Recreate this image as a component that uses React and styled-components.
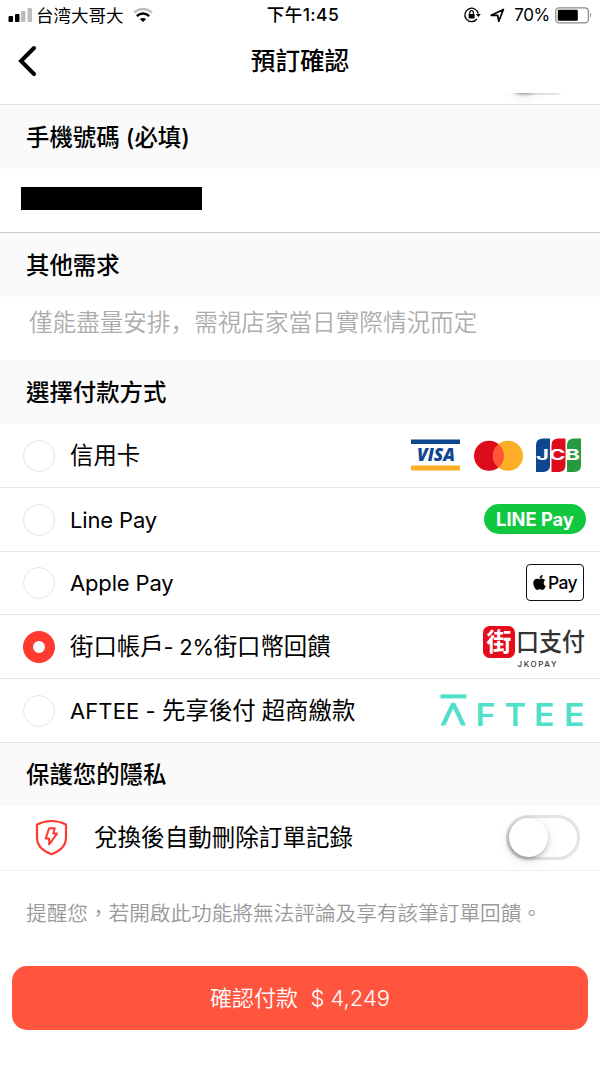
import { FaApple } from "react-icons/fa";
import styled, { createGlobalStyle, css } from "styled-components";

const GlobalStyle = createGlobalStyle`
  * {
    box-sizing: border-box;
  }

  body {
    margin: 0;
    background-color: #fff;
    color: #000;
    font-family: Inter, "Noto Sans CJK TC", sans-serif;
  }

  svg {
    flex: none;
    overflow: visible;
  }
`;

const Screen = styled.div`
  display: flex;
  flex-direction: column;
  width: 600px;
  height: 1067px;
  overflow: hidden;
  background-color: #fff;
`;

const StatusBar = styled.div`
  display: grid;
  grid-template-columns: 1fr auto 1fr;
  align-items: center;
  height: 30px;
  padding: 0 7px 0 8px;
  font-size: 17.5px;
  line-height: 28px;
  white-space: nowrap;
`;

const StatusGroup = styled.div`
  display: flex;
  align-items: center;
  justify-content: ${(props) => (props.$end ? "flex-end" : "flex-start")};
`;

const Carrier = styled.span`
  margin: 0 9px 0 4px;
  font-family: "Noto Sans CJK SC", sans-serif;
`;

const Clock = styled.span`
  padding-left: 5px;
  font-weight: 500;
  letter-spacing: 0.4px;
`;

const Percent = styled.span`
  margin: 0 5px 0 9px;
  font-size: 17px;
  letter-spacing: -0.3px;
`;

const NavBar = styled.header`
  display: grid;
  grid-template-columns: 60px 1fr 60px;
  align-items: center;
  height: 63px;
`;

const BackButton = styled.button`
  display: flex;
  padding: 0 0 2px 18px;
  border: none;
  background: none;
`;

const Title = styled.h1`
  margin: 0;
  text-align: center;
  font-weight: 500;
  font-size: 24.6px;
  line-height: 61px;
`;

const ScrolledRow = styled.div`
  display: flex;
  align-items: flex-end;
  justify-content: flex-end;
  height: 11px;
  padding: 0 24px 9px 0;
  overflow: hidden;
`;

const SectionTitle = styled.h2`
  height: ${(props) => props.$height || 64}px;
  margin: 0;
  padding-left: 26px;
  border-top: 1px solid ${(props) => props.$line || "#fafafa"};
  background-color: #fafafa;
  font-weight: 500;
  font-size: 23.4px;
  line-height: ${(props) => (props.$height ? 65 : 64)}px;
`;

const PhoneField = styled.div`
  display: flex;
  align-items: center;
  height: 63px;
  padding: 0 0 4px 21px;
`;

const Redacted = styled.div`
  width: 181px;
  height: 23px;
  background-color: #000;
`;

const Placeholder = styled.div`
  height: 63px;
  padding-left: 29px;
  color: #adadad;
  font-size: 23.6px;
  font-weight: 350;
  line-height: 49px;
`;

const LowComma = styled.span`
  font-family: "Noto Sans CJK SC", sans-serif;
`;

const Option = styled.div`
  display: flex;
  align-items: center;
  height: ${(props) => props.$height || 64}px;
  padding: 0 15px 0 23px;
  ${(props) =>
    !props.$last &&
    css`
      border-bottom: 1px solid #e6e6e6;
    `}
`;

const Radio = styled.span`
  width: 32px;
  height: 32px;
  margin-right: 15px;
  border: ${(props) => (props.$checked ? "10px solid #ff3b30" : "1.5px solid #e6e6e6")};
  border-radius: 50%;
`;

const Label = styled.span`
  flex: 1;
  font-size: 23.4px;
  line-height: 62px;
  white-space: pre;
`;

const Latin = styled.span`
  font-size: 22px;
  letter-spacing: ${(props) => props.$spacing || -0.15}px;
`;

const Logos = styled.span`
  display: flex;
  align-items: center;
  margin-top: -2px;
`;

const LinePayBadge = styled.span`
  width: 102px;
  height: 30px;
  margin-right: -1px;
  border-radius: 15px;
  background-color: #0fc83f;
  color: #fff;
  font-weight: 700;
  font-size: 18.3px;
  line-height: 30px;
  text-align: center;
`;

const ApplePayBadge = styled.span`
  display: flex;
  align-items: center;
  justify-content: center;
  width: 58px;
  height: 37px;
  margin-right: 1px;
  padding-right: 2px;
  border: 1.5px solid #111;
  border-radius: 4px;
  font-weight: 500;
  font-size: 17.5px;
  letter-spacing: -0.7px;
`;

const PrivacyRow = styled.div`
  display: flex;
  align-items: center;
  height: 65px;
  padding: 0 20px 2px 35px;
  border-bottom: 1px solid #f0f0f0;
`;

const PrivacyLabel = styled(Label)`
  padding: 2px 0 0 26px;
  font-size: 23.55px;
`;

const Track = styled.span`
  display: block;
  flex: none;
  width: 74px;
  height: 45px;
  border: 3px solid #e3e3e3;
  border-radius: 23px;
`;

const Knob = styled.span`
  display: block;
  width: 39px;
  height: 39px;
  border-radius: 50%;
  background-color: #fff;
  box-shadow: -1px 2px 4px rgba(0, 0, 0, 0.32), 0 3px 14px rgba(0, 0, 0, 0.1);
`;

const Hint = styled.p`
  height: 95px;
  margin: 0;
  padding-left: 26px;
  color: #999;
  font-weight: 350;
  font-size: 20.65px;
  line-height: 86px;
  white-space: nowrap;
`;

const PayButton = styled.button`
  height: 64px;
  margin: 0 12px;
  padding: 0;
  border: none;
  border-radius: 15px;
  background-color: #ff553f;
  color: #fff;
  font-family: inherit;
  font-weight: 350;
  font-size: 22px;
  line-height: 64px;
  white-space: pre;
`;

function Signal() {
  return (
    <svg width="24" height="15" viewBox="0 0 24 15">
      <rect x="0.5" y="8" width="4.5" height="6" rx="1" />
      <rect x="7" y="6" width="4.5" height="8" rx="1" />
      <rect x="13" y="3" width="4.5" height="11" rx="1" fill="#bdbdbd" />
      <rect x="19.5" y="0" width="4.5" height="14" rx="1" fill="#bdbdbd" />
    </svg>
  );
}

function Wifi() {
  return (
    <svg width="20" height="15" viewBox="0 0 20 15" fill="none" strokeWidth="2.4">
      <path d="M1 4.6Q10-2.6 19 4.6" stroke="#bdbdbd" />
      <path d="M3.8 8Q10 2.9 16.2 8" stroke="#000" />
      <path d="M6.8 10.9Q10 8.9 13.2 10.9L10 14Z" fill="#000" />
    </svg>
  );
}

function RotationLock() {
  return (
    <svg width="17" height="16" viewBox="0 0 17 16" fill="none" stroke="#000" strokeWidth="1.3">
      <path d="M14.2 6.7A6.7 6.7 0 1 0 12.9 12" />
      <path d="M11.9 7H16.8L14.4 9.9Z" fill="#000" stroke="none" />
      <rect x="4.6" y="6.9" width="6" height="4.6" rx="0.6" fill="#000" stroke="none" />
      <path d="M5.8 7V5.4A1.8 1.8 0 0 1 9.4 5.4V7" strokeWidth="1.2" />
    </svg>
  );
}

const ArrowIcon = styled.svg`
  margin-left: 9px;
`;

function LocationArrow() {
  return (
    <ArrowIcon width="15" height="15" viewBox="0 0 15 15">
      <path d="M1.2 7.3L13.4 1.4L8.8 13.3L7.6 7.4Z" fill="none" stroke="#000" strokeWidth="1.7" strokeLinejoin="round" />
    </ArrowIcon>
  );
}

function Battery() {
  return (
    <svg width="38" height="17" viewBox="0 0 38 17">
      <rect x="0.8" y="0.8" width="32.6" height="15" rx="3.5" fill="none" stroke="#8c8c8c" strokeWidth="1.3" />
      <rect x="2.8" y="2.8" width="20" height="11" rx="1" />
      <path d="M35.2 5.6Q37.3 8.2 35.2 10.8Z" fill="#8c8c8c" />
    </svg>
  );
}

function CardLogos() {
  return (
    <svg width="174" height="36" viewBox="0 0 174 36" fontFamily="'Open Sans', sans-serif" fontWeight="700">
      <rect x="0" y="2.5" width="49" height="4.5" fill="#10458f" />
      <rect x="0" y="28.5" width="49" height="5" fill="#fcae26" />
      <text x="6" y="24" fontSize="17" fontWeight="800" fontStyle="italic" textLength="38" lengthAdjust="spacingAndGlyphs" fill="#10458f">
        VISA
      </text>
      <circle cx="78" cy="18.8" r="15" fill="#dd0b1b" />
      <circle cx="97" cy="18.8" r="15" fill="#fcae26" />
      <path d="M87.5 7.2A15 15 0 0 1 87.5 30.4A15 15 0 0 1 87.5 7.2Z" fill="#ff5539" />
      <path d="M132 1.5H139V28.5Q139 35 132 35H125V8Q125 1.5 132 1.5Z" fill="#10458f" />
      <path d="M147.5 1.5H154.5V28.5Q154.5 35 147.5 35H140.5V8Q140.5 1.5 147.5 1.5Z" fill="#dd0b1b" />
      <path d="M163 1.5H170V28.5Q170 35 163 35H156V8Q156 1.5 163 1.5Z" fill="#269a3f" />
      <text x="125" y="23.4" fontSize="15" fontFamily="Inter, sans-serif" textLength="44" lengthAdjust="spacingAndGlyphs" fill="#fff">
        JCB
      </text>
    </svg>
  );
}

function JkoLogo() {
  return (
    <svg width="102" height="44" viewBox="0 0 102 44" fontFamily="'Noto Sans CJK TC', sans-serif">
      <rect x="0" y="2" width="32" height="32" rx="6.5" fill="#e50b1b" />
      <text x="3.5" y="27" fontSize="25" fontWeight="700" fill="#fff">
        街
      </text>
      <text x="33" y="27" fontSize="24.5" fontWeight="500" textLength="69" lengthAdjust="spacingAndGlyphs" fill="#333">
        口支付
      </text>
      <text x="34.5" y="42.8" fontSize="8" fontFamily="Inter, sans-serif" fontWeight="500" textLength="39" fill="#333">
        JKOPAY
      </text>
    </svg>
  );
}

function AfteeLogo() {
  return (
    <svg width="146" height="34" viewBox="0 0 146 34" fill="#50dfc9">
      <rect x="1.5" y="1.4" width="26" height="4" />
      <path d="M1.5 32.5L12.3 9.7H16.2L27 32.5H22.2L14.2 15.6L6.3 32.5Z" />
      <g fontFamily="Inter, sans-serif" fontWeight="600" fontSize="31">
        <text x="36.5" y="32.5" textLength="20" lengthAdjust="spacingAndGlyphs">
          F
        </text>
        <text x="65.5" y="32.5" textLength="21.5" lengthAdjust="spacingAndGlyphs">
          T
        </text>
        <text x="95" y="32.5" textLength="20.5" lengthAdjust="spacingAndGlyphs">
          E
        </text>
        <text x="125" y="32.5" textLength="20.5" lengthAdjust="spacingAndGlyphs">
          E
        </text>
      </g>
    </svg>
  );
}

function ShieldIcon() {
  return (
    <svg width="33" height="36" viewBox="0 0 33 36" fill="none" stroke="#ff3b30" strokeLinejoin="round">
      <path d="M2 5.6Q9 2 16.5 2Q24 2 31 5.6V18.6Q31 30 16.5 35.2Q2 30 2 18.6Z" strokeWidth="2.2" />
      <path d="M14.2 9.2H19.8L18.2 14.6H22L14.2 25.4V19.6H10.6Z" strokeWidth="2" />
    </svg>
  );
}

function Toggle() {
  return (
    <Track>
      <Knob />
    </Track>
  );
}

const methods = [
  { id: "card", label: "信用卡", logo: <CardLogos /> },
  { id: "line", label: <Latin>Line Pay</Latin>, logo: <LinePayBadge>LINE Pay</LinePayBadge> },
  {
    id: "apple",
    label: <Latin>Apple Pay</Latin>,
    height: 63,
    logo: (
      <ApplePayBadge>
        <FaApple size={17} />
        Pay
      </ApplePayBadge>
    ),
  },
  {
    id: "jko",
    label: (
      <>
        街口帳戶<Latin $spacing={-0.3}>- 2%</Latin>街口幣回饋
      </>
    ),
    logo: <JkoLogo />,
  },
  {
    id: "aftee",
    label: (
      <>
        <Latin $spacing={0.1}>AFTEE - </Latin>先享後付<Latin> </Latin>超商繳款
      </>
    ),
    height: 63,
    logo: <AfteeLogo />,
  },
];

function App() {
  return (
    <>
      <GlobalStyle />
      <Screen>
        <StatusBar>
          <StatusGroup>
            <Signal />
            <Carrier>台湾大哥大</Carrier>
            <Wifi />
          </StatusGroup>
          <Clock>下午1:45</Clock>
          <StatusGroup $end>
            <RotationLock />
            <LocationArrow />
            <Percent>70%</Percent>
            <Battery />
          </StatusGroup>
        </StatusBar>

        <NavBar>
          <BackButton>
            <svg width="20" height="32" viewBox="0 0 20 32" fill="none">
              <path d="M16 3L3 16L16 29" stroke="#000" strokeWidth="4" strokeLinecap="round" />
            </svg>
          </BackButton>
          <Title>預訂確認</Title>
        </NavBar>

        <ScrolledRow>
          <Toggle />
        </ScrolledRow>

        <SectionTitle $line="#e3e3e3" $height={65}>
          手機號碼 (必填)
        </SectionTitle>
        <PhoneField>
          <Redacted />
        </PhoneField>

        <SectionTitle $line="#c8c8c8" $height={65}>
          其他需求
        </SectionTitle>
        <Placeholder>
          僅能盡量安排<LowComma>，</LowComma>需視店家當日實際情況而定
        </Placeholder>

        <SectionTitle>選擇付款方式</SectionTitle>
        {methods.map((method, i) => (
          <Option key={method.id} $height={method.height} $last={i === methods.length - 1}>
            <Radio $checked={method.id === "jko"} />
            <Label>{method.label}</Label>
            <Logos>{method.logo}</Logos>
          </Option>
        ))}

        <SectionTitle $line="#e6e6e6">保護您的隱私</SectionTitle>
        <PrivacyRow>
          <ShieldIcon />
          <PrivacyLabel>兌換後自動刪除訂單記錄</PrivacyLabel>
          <Toggle />
        </PrivacyRow>
        <Hint>提醒您，若開啟此功能將無法評論及享有該筆訂單回饋。</Hint>

        <PayButton>確認付款  $ 4,249</PayButton>
      </Screen>
    </>
  );
}

export default App;
